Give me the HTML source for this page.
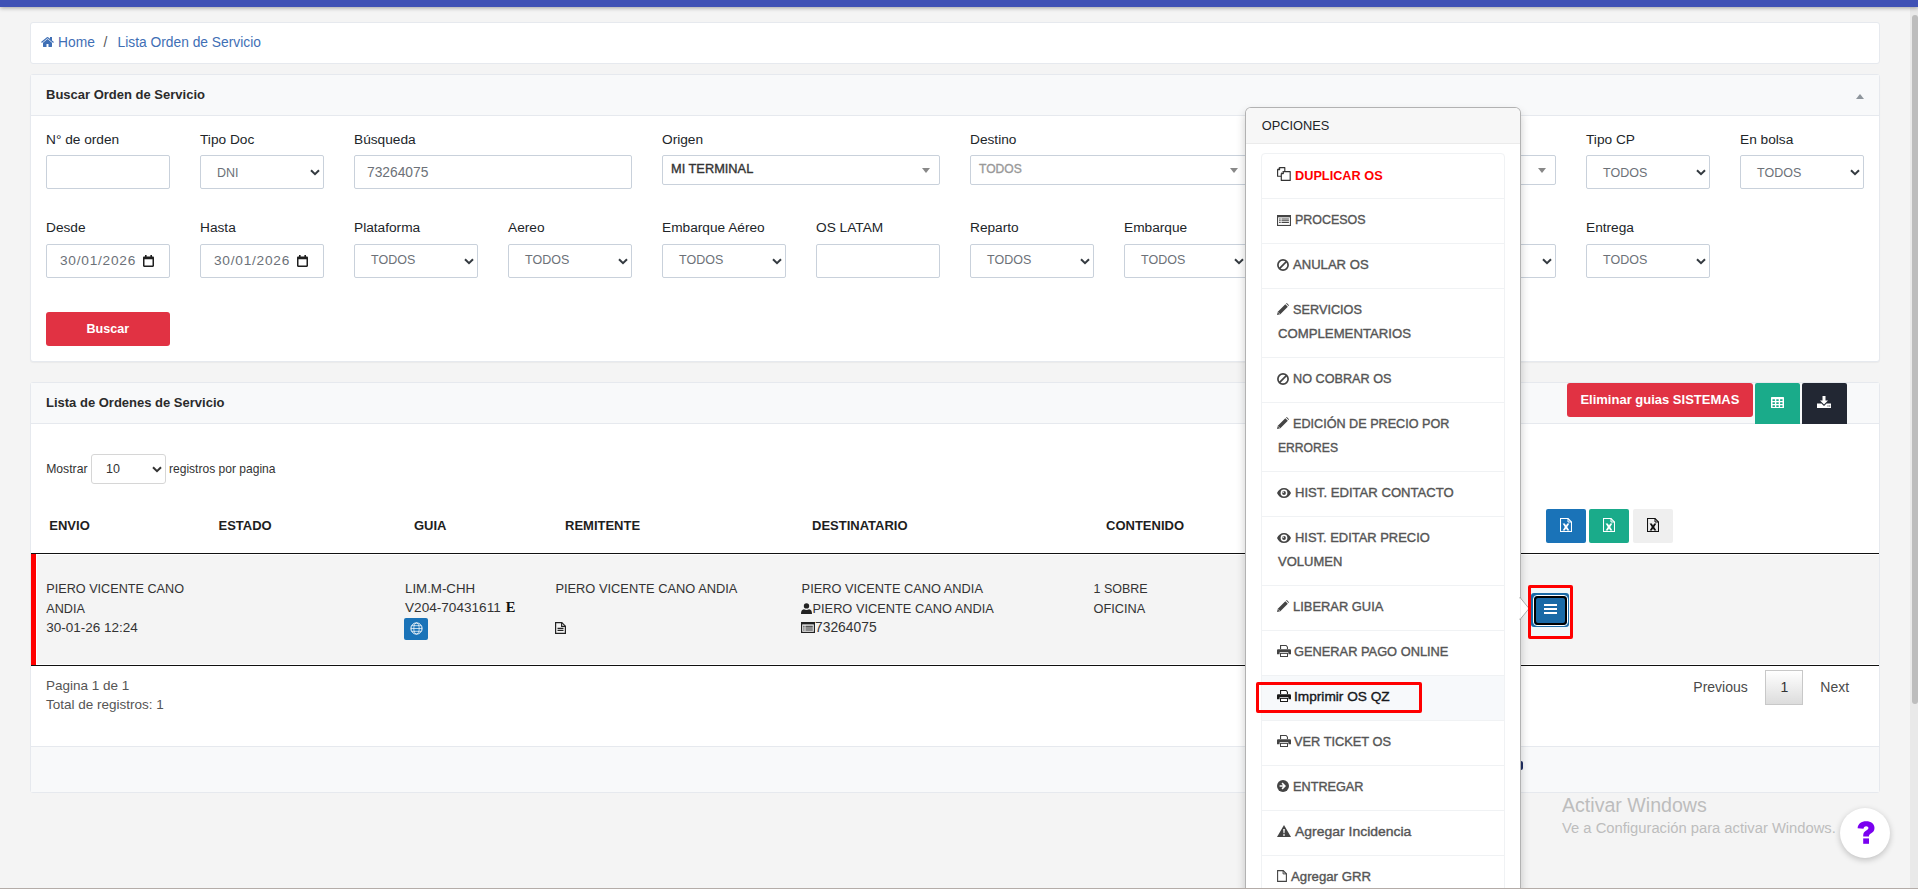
<!DOCTYPE html>
<html><head><meta charset="utf-8">
<style>
*{box-sizing:border-box}
html,body{margin:0;padding:0}
body{width:1918px;height:889px;overflow:hidden;background:#f4f4f4;position:relative;font-family:"Liberation Sans",sans-serif;color:#212529}
.a{position:absolute}
.t{line-height:1;white-space:nowrap}
.topbar{left:0;top:0;width:1918px;z-index:5;height:7px;background:#3f51b5;box-shadow:0 1px 4px rgba(0,0,0,.35)}
.card{position:absolute;left:30px;width:1850px;background:#fff;border:1px solid #e6e9ee;border-radius:3px}
.bc{top:22px;height:42px}
.bc span{position:absolute;top:12px;font-size:13.8px;color:#3f6fb5;white-space:nowrap}
.chdr{position:absolute;left:0;top:0;right:0;background:#f8f9fa;border-bottom:1px solid #e6e9ee}
.ttl{position:absolute;left:14px;font-weight:bold;font-size:13px;color:#2b2b2b;white-space:nowrap}
.lbl{position:absolute;font-size:13.7px;color:#212529;white-space:nowrap}
.inp{position:absolute;height:34px;border:1px solid #c9d1db;border-radius:2px;background:#fff}
.sel{position:absolute;height:34px;border:1px solid #c9d1db;border-radius:2px;background:#fff}
.sel .v{position:absolute;left:16px;top:10.8px;font-size:12.5px;color:#6c7178;white-space:nowrap}
.sel svg{position:absolute;right:3px;top:13px}
.s2{position:absolute;height:30px;border:1px solid #c9d1db;border-radius:2px;background:#fff}
.s2 .v{position:absolute;left:8px;top:6.6px;font-size:12.8px;-webkit-text-stroke:0.35px currentColor;white-space:nowrap}
.s2 .tri{position:absolute;right:9px;top:11.5px;width:0;height:0;border-left:4px solid transparent;border-right:4px solid transparent;border-top:5px solid #888}
</style></head><body>
<div class="a topbar"></div>

<!-- breadcrumb -->
<div class="card bc">
  <svg class="a" style="left:10px;top:14.2px" width="13" height="10" viewBox="0 29 1664 1283" preserveAspectRatio="none"><path d="M1408 768v480q0 26-19 45t-45 19H960V928H704v384H320q-26 0-45-19t-19-45V768q0-1 .5-3t.5-3l575-474 575 474q1 2 1 6zm223-69l-62 74q-8 9-21 11h-3q-13 0-21-7L832 200 140 777q-12 8-24 7-13-2-21-11l-62-74q-8-10-7-23.5T37 654L756 55q32-26 76-26t76 26l244 204V64q0-14 9-23t23-9h192q14 0 23 9t9 23v408l219 182q10 8 11 21.5t-7 23.5z" fill="#3f6fb5"/></svg>
  <span style="left:27px">Home</span>
  <span style="left:72.5px;color:#555">/</span>
  <span style="left:86.5px">Lista Orden de Servicio</span>
</div>

<!-- search card -->
<div class="card" style="top:74px;height:288px;box-shadow:0 1px 1px rgba(0,0,0,.04)">
  <div class="chdr" style="height:41px">
    <div class="a" style="left:1825px;top:19px;width:0;height:0;border-left:4.5px solid transparent;border-right:4.5px solid transparent;border-bottom:5px solid #8e959c"></div>
  </div>
</div>
<!-- fields -->
<div class="t a" style="left:46px;top:88.3px;font-size:13px;font-weight:bold;color:#2b2b2b">Buscar Orden de Servicio</div>
<div class="t lbl" style="left:46px;top:133.1px">N° de orden</div>
<div class="inp" style="left:46px;top:155px;width:124px"></div>
<div class="t lbl" style="left:200px;top:133.1px">Tipo Doc</div>
<div class="sel" style="left:200px;top:155px;width:124px"><span class="v t">DNI</span><svg width="10" height="7" viewBox="0 0 10 7"><path d="M1 1.2l4 4 4-4" fill="none" stroke="#343a40" stroke-width="2"/></svg></div>
<div class="t lbl" style="left:354px;top:133.1px">Búsqueda</div>
<div class="inp" style="left:354px;top:155px;width:278px"><span class="t" style="position:absolute;left:12px;top:10.4px;font-size:13.8px;color:#6c7178">73264075</span></div>
<div class="t lbl" style="left:662px;top:133.1px">Origen</div>
<div class="s2" style="left:662px;top:155px;width:278px"><span class="v t" style="color:#333">MI TERMINAL</span><i class="tri"></i></div>
<div class="t lbl" style="left:970px;top:133.1px">Destino</div>
<div class="s2" style="left:970px;top:155px;width:278px"><span class="v t" style="color:#999;font-size:12.1px;top:7px">TODOS</span><i class="tri"></i></div>
<div class="t lbl" style="left:1278px;top:133.1px">Tipo</div>
<div class="s2" style="left:1278px;top:155px;width:278px"><span class="v t" style="color:#999;font-size:12.1px;top:7px">TODOS</span><i class="tri"></i></div>
<div class="t lbl" style="left:1586px;top:133.1px">Tipo CP</div>
<div class="sel" style="left:1586px;top:155px;width:124px"><span class="v t">TODOS</span><svg width="10" height="7" viewBox="0 0 10 7"><path d="M1 1.2l4 4 4-4" fill="none" stroke="#343a40" stroke-width="2"/></svg></div>
<div class="t lbl" style="left:1740px;top:133.1px">En bolsa</div>
<div class="sel" style="left:1740px;top:155px;width:124px"><span class="v t">TODOS</span><svg width="10" height="7" viewBox="0 0 10 7"><path d="M1 1.2l4 4 4-4" fill="none" stroke="#343a40" stroke-width="2"/></svg></div>
<div class="t lbl" style="left:46px;top:221.2px">Desde</div>
<div class="inp" style="left:46px;top:244px;width:124px"><span class="t" style="position:absolute;left:13px;top:9.4px;font-size:13.7px;color:#6c7178;letter-spacing:0.75px">30/01/2026</span><span style="position:absolute;left:96px;top:10px;line-height:0"><svg width="11" height="12" viewBox="0 0 11 12"><path d="M2 0h1.6v1.5h3.8V0H9v1.5h.8c.7 0 1.2.5 1.2 1.2v8.1c0 .7-.5 1.2-1.2 1.2H1.2C.5 12 0 11.5 0 10.8V2.7C0 2 .5 1.5 1.2 1.5H2zM1.5 4.3v6.2h8V4.3z" fill="#1f1f1f"/></svg></span></div>
<div class="t lbl" style="left:200px;top:221.2px">Hasta</div>
<div class="inp" style="left:200px;top:244px;width:124px"><span class="t" style="position:absolute;left:13px;top:9.4px;font-size:13.7px;color:#6c7178;letter-spacing:0.75px">30/01/2026</span><span style="position:absolute;left:96px;top:10px;line-height:0"><svg width="11" height="12" viewBox="0 0 11 12"><path d="M2 0h1.6v1.5h3.8V0H9v1.5h.8c.7 0 1.2.5 1.2 1.2v8.1c0 .7-.5 1.2-1.2 1.2H1.2C.5 12 0 11.5 0 10.8V2.7C0 2 .5 1.5 1.2 1.5H2zM1.5 4.3v6.2h8V4.3z" fill="#1f1f1f"/></svg></span></div>
<div class="t lbl" style="left:354px;top:221.2px">Plataforma</div>
<div class="sel" style="left:354px;top:244px;width:124px"><span class="v t" style="top:9.3px">TODOS</span><svg width="10" height="7" viewBox="0 0 10 7"><path d="M1 1.2l4 4 4-4" fill="none" stroke="#343a40" stroke-width="2"/></svg></div>
<div class="t lbl" style="left:508px;top:221.2px">Aereo</div>
<div class="sel" style="left:508px;top:244px;width:124px"><span class="v t" style="top:9.3px">TODOS</span><svg width="10" height="7" viewBox="0 0 10 7"><path d="M1 1.2l4 4 4-4" fill="none" stroke="#343a40" stroke-width="2"/></svg></div>
<div class="t lbl" style="left:662px;top:221.2px">Embarque Aéreo</div>
<div class="sel" style="left:662px;top:244px;width:124px"><span class="v t" style="top:9.3px">TODOS</span><svg width="10" height="7" viewBox="0 0 10 7"><path d="M1 1.2l4 4 4-4" fill="none" stroke="#343a40" stroke-width="2"/></svg></div>
<div class="t lbl" style="left:816px;top:221.2px">OS LATAM</div>
<div class="inp" style="left:816px;top:244px;width:124px"></div>
<div class="t lbl" style="left:970px;top:221.2px">Reparto</div>
<div class="sel" style="left:970px;top:244px;width:124px"><span class="v t" style="top:9.3px">TODOS</span><svg width="10" height="7" viewBox="0 0 10 7"><path d="M1 1.2l4 4 4-4" fill="none" stroke="#343a40" stroke-width="2"/></svg></div>
<div class="t lbl" style="left:1124px;top:221.2px">Embarque</div>
<div class="sel" style="left:1124px;top:244px;width:124px"><span class="v t" style="top:9.3px">TODOS</span><svg width="10" height="7" viewBox="0 0 10 7"><path d="M1 1.2l4 4 4-4" fill="none" stroke="#343a40" stroke-width="2"/></svg></div>
<div class="t lbl" style="left:1278px;top:221.2px">Estado</div>
<div class="sel" style="left:1278px;top:244px;width:124px"><span class="v t" style="top:9.3px">TODOS</span><svg width="10" height="7" viewBox="0 0 10 7"><path d="M1 1.2l4 4 4-4" fill="none" stroke="#343a40" stroke-width="2"/></svg></div>
<div class="t lbl" style="left:1432px;top:221.2px">Otro</div>
<div class="sel" style="left:1432px;top:244px;width:124px"><span class="v t" style="top:9.3px">TODOS</span><svg width="10" height="7" viewBox="0 0 10 7"><path d="M1 1.2l4 4 4-4" fill="none" stroke="#343a40" stroke-width="2"/></svg></div>
<div class="t lbl" style="left:1586px;top:221.2px">Entrega</div>
<div class="sel" style="left:1586px;top:244px;width:124px"><span class="v t" style="top:9.3px">TODOS</span><svg width="10" height="7" viewBox="0 0 10 7"><path d="M1 1.2l4 4 4-4" fill="none" stroke="#343a40" stroke-width="2"/></svg></div>
<div class="a btnred" style="left:46px;top:312px;width:124px;height:34px;border-radius:3px;background:#e13243"><span class="t" style="position:absolute;left:40.5px;top:11.4px;font-size:12.6px;font-weight:bold;color:#fff">Buscar</span></div>
<!-- list -->
<div class="card" style="top:382px;height:411px"><div class="chdr" style="height:41px"></div><div class="a" style="left:0;right:0;top:363px;height:46px;background:#f8f9fa;border-top:1px solid #e6e9ee"></div></div>
<div class="t a" style="left:46px;top:396.2px;font-size:13px;font-weight:bold;color:#2b2b2b">Lista de Ordenes de Servicio</div>
<div class="a" style="left:1567px;top:383px;width:186px;height:34px;background:#e13243;border-radius:3px"></div>
<div class="t a" style="left:1580.4px;top:393.1px;font-size:13px;font-weight:bold;color:#fff">Eliminar guias SISTEMAS</div>
<div class="a" style="left:1755px;top:383px;width:45px;height:41px;background:#1aab8a;border-radius:2px 2px 0 0"></div>
<svg class="a" style="left:1771px;top:397px" width="13" height="11" viewBox="0 0 13 11"><path d="M0 .6Q0 0 .6 0h11.8q.6 0 .6.6v9.8q0 .6-.6.6H.6Q0 11 0 10.4z" fill="#fff"/><path d="M1.5 2.2h2.4v1.9H1.5zM5.3 2.2h2.4v1.9H5.3zM9.1 2.2h2.4v1.9H9.1zM1.5 5.2h2.4v1.9H1.5zM5.3 5.2h2.4v1.9H5.3zM9.1 5.2h2.4v1.9H9.1zM1.5 8.2h2.4v1.7H1.5zM5.3 8.2h2.4v1.7H5.3zM9.1 8.2h2.4v1.7H9.1z" fill="#1aab8a"/></svg>
<div class="a" style="left:1802px;top:383px;width:45px;height:41px;background:#222733;border-radius:2px 2px 0 0"></div>
<svg class="a" style="left:1817px;top:396px" width="14" height="12" viewBox="0 0 14 12"><path d="M5.5 0h3v4.5h2.5L7 8.5 3 4.5h2.5z" fill="#fff"/><path d="M0 7.5h4.5L7 10l2.5-2.5H14V12H0z" fill="#fff"/><path d="M10.5 9.6h1v1h-1zM12.2 9.6h1v1h-1z" fill="#222733"/></svg>
<div class="t a" style="left:46.2px;top:462.9px;font-size:12.2px;color:#333">Mostrar</div>
<div class="a" style="left:91px;top:454px;width:75px;height:30px;border:1px solid #d6d6d6;border-radius:3px;background:#fff"></div>
<div class="t a" style="left:106px;top:462.6px;font-size:12.5px;color:#333">10</div>
<svg class="a" style="left:152px;top:466px" width="10" height="7" viewBox="0 0 10 7"><path d="M1 1.2l4 4 4-4" fill="none" stroke="#333" stroke-width="2"/></svg>
<div class="t a" style="left:169px;top:463.0px;font-size:12.05px;color:#333">registros por pagina</div>
<div class="t a" style="left:49.3px;top:519.0px;font-size:13px;font-weight:bold;color:#1e1e1e">ENVIO</div>
<div class="t a" style="left:218.5px;top:519.0px;font-size:13px;font-weight:bold;color:#1e1e1e">ESTADO</div>
<div class="t a" style="left:414px;top:519.0px;font-size:13px;font-weight:bold;color:#1e1e1e">GUIA</div>
<div class="t a" style="left:565px;top:519.0px;font-size:13px;font-weight:bold;color:#1e1e1e">REMITENTE</div>
<div class="t a" style="left:812px;top:519.0px;font-size:13px;font-weight:bold;color:#1e1e1e">DESTINATARIO</div>
<div class="t a" style="left:1106px;top:519.0px;font-size:13px;font-weight:bold;color:#1e1e1e">CONTENIDO</div>
<div class="a" style="left:1546px;top:509px;width:40px;height:34px;background:#1a73b8;border-radius:2px"><span class="a" style="left:14px;top:9px;line-height:0"><svg width="12" height="14" viewBox="0 0 12 14"><path d="M.5.5h7.5l3.5 3.5v9.5H.5z" fill="none" stroke="#fff" stroke-width="1.1"/><path d="M8 .5v3.5h3.5" fill="none" stroke="#fff" stroke-width="1"/><path d="M2.6 5.5h2.2l1.2 2 1.2-2h2.2L7.2 9l2.2 3.5H7.2L6 10.5l-1.2 2H2.6L4.8 9z" fill="#fff"/></svg></span></div>
<div class="a" style="left:1589px;top:509px;width:40px;height:34px;background:#1aab8a;border-radius:2px"><span class="a" style="left:14px;top:9px;line-height:0"><svg width="12" height="14" viewBox="0 0 12 14"><path d="M.5.5h7.5l3.5 3.5v9.5H.5z" fill="none" stroke="#fff" stroke-width="1.1"/><path d="M8 .5v3.5h3.5" fill="none" stroke="#fff" stroke-width="1"/><path d="M2.6 5.5h2.2l1.2 2 1.2-2h2.2L7.2 9l2.2 3.5H7.2L6 10.5l-1.2 2H2.6L4.8 9z" fill="#fff"/></svg></span></div>
<div class="a" style="left:1633px;top:509px;width:40px;height:34px;background:#efefef;border-radius:2px"><span class="a" style="left:14px;top:9px;line-height:0"><svg width="12" height="14" viewBox="0 0 12 14"><path d="M.5.5h7.5l3.5 3.5v9.5H.5z" fill="none" stroke="#111" stroke-width="1.1"/><path d="M8 .5v3.5h3.5" fill="none" stroke="#111" stroke-width="1"/><path d="M2.6 5.5h2.2l1.2 2 1.2-2h2.2L7.2 9l2.2 3.5H7.2L6 10.5l-1.2 2H2.6L4.8 9z" fill="#111"/></svg></span></div>
<div class="a" style="left:31px;top:553px;width:1848px;height:1px;background:#111"></div>
<div class="a" style="left:37px;top:555px;width:1842px;height:109px;background:#f4f4f4"></div>
<div class="a" style="left:31px;top:665px;width:1848px;height:1px;background:#111"></div>
<div class="a" style="left:31px;top:554px;width:5px;height:111px;background:#f00"></div>
<div class="t a" style="left:46.3px;top:583.1px;font-size:12.65px;color:#333">PIERO VICENTE CANO</div>
<div class="t a" style="left:46.3px;top:602.9px;font-size:12.65px;color:#333">ANDIA</div>
<div class="t a" style="left:46.3px;top:621.2px;font-size:13.5px;color:#333">30-01-26 12:24</div>
<div class="t a" style="left:405px;top:581.7px;font-size:13.3px;color:#333">LIM.M-CHH</div>
<div class="t a" style="left:405px;top:601.2px;font-size:13.6px;color:#333">V204-70431611</div>
<div class="t a" style="left:505.8px;top:600.4px;font-size:14.5px;font-family:'Liberation Serif',serif;font-weight:bold;color:#111">E</div>
<div class="a" style="left:404px;top:618px;width:24px;height:22px;background:#1a73b8;border-radius:2px"><span class="a" style="left:5.5px;top:3.6px;line-height:0"><svg width="13" height="13" viewBox="0 0 13 13"><g fill="none" stroke="#fff"><circle cx="6.5" cy="6.5" r="5.6" stroke-width="1"/><ellipse cx="6.5" cy="6.5" rx="2.7" ry="5.6" stroke-width=".7"/><path d="M.9 6.5h11.2M1.8 3.7h9.4M1.8 9.3h9.4" stroke-width=".7"/></g></svg></span></div>
<div class="t a" style="left:555.4px;top:583.0px;font-size:12.85px;color:#333">PIERO VICENTE CANO ANDIA</div>
<span class="a" style="left:554.6px;top:622px;line-height:0"><svg width="11" height="12" viewBox="0 0 11 12"><path d="M.6.6h6.2l3.6 3.6v7.2H.6z" fill="none" stroke="#222" stroke-width="1.2"/><path d="M6.6.6v3.8h3.8" fill="none" stroke="#222" stroke-width="1.1"/><path d="M2.5 6.4h6M2.5 8.4h6" stroke="#222" stroke-width="1.1"/></svg></span>
<div class="t a" style="left:801.6px;top:582.8px;font-size:12.8px;color:#333">PIERO VICENTE CANO ANDIA</div>
<span class="a" style="left:801px;top:603px;line-height:0"><svg width="11" height="11" viewBox="0 0 11 11"><circle cx="5.5" cy="2.9" r="2.7" fill="#222"/><path d="M0 11c0-3 .9-4.6 3-4.8.7.5 1.5.8 2.5.8s1.8-.3 2.5-.8c2.1.2 3 1.8 3 4.8z" fill="#222"/></svg></span>
<div class="t a" style="left:812.5px;top:602.7px;font-size:12.8px;color:#333">PIERO VICENTE CANO ANDIA</div>
<span class="a" style="left:801px;top:622px;line-height:0"><svg width="14" height="11" viewBox="0 0 14 11"><path d="M0 0h14v11H0z" fill="#222"/><path d="M1.2 2.4h11.6v7.4H1.2z" fill="#f4f4f4"/><path d="M2.2 3.7h1.4v1H2.2zM4.4 3.7h7.4v1H4.4zM2.2 5.6h1.4v1H2.2zM4.4 5.6h7.4v1H4.4zM2.2 7.5h1.4v1H2.2zM4.4 7.5h7.4v1H4.4z" fill="#222"/></svg></span>
<div class="t a" style="left:815px;top:620.8px;font-size:13.85px;color:#333">73264075</div>
<div class="t a" style="left:1093.5px;top:583.0px;font-size:12.5px;color:#333">1 SOBRE</div>
<div class="t a" style="left:1093.5px;top:602.7px;font-size:12.75px;color:#333">OFICINA</div>
<div class="t a" style="left:46px;top:679.3px;font-size:13.5px;color:#555">Pagina 1 de 1</div>
<div class="t a" style="left:46px;top:698.0px;font-size:13.5px;color:#555">Total de registros: 1</div>
<!-- popover -->
<div class="a" style="left:1245px;top:107px;width:276px;height:800px;background:#fff;border:1px solid rgba(0,0,0,.3);border-radius:6px;box-shadow:0 5px 10px rgba(0,0,0,.2)"><div class="a" style="left:0;top:0;right:0;height:36px;background:#f7f7f7;border-bottom:1px solid #ebebeb;border-radius:5px 5px 0 0"></div></div>
<svg class="a" style="left:1519px;top:597px" width="11" height="23" viewBox="0 0 11 23"><path d="M1 0.5L10 11.5 1 22.5z" fill="#fff" stroke="rgba(0,0,0,.3)" stroke-width="1"/><path d="M0 1.5h1.6v20H0z" fill="#fff"/></svg>
<div class="t a" style="left:1261.7px;top:120.2px;font-size:12.8px;color:#212529">OPCIONES</div>
<div class="a" style="left:1261px;top:153.0px;width:243.5px;height:46.0px;background:#fff;border:1px solid #f0f2f4;border-radius:4px 4px 0 0;"></div>
<span class="a" style="left:1277px;top:166.7px;line-height:0"><svg width="14" height="14" viewBox="0 0 14 14"><g fill="#fff" stroke="#333" stroke-width="1.15" stroke-linejoin="round"><path d="M2.6.6h5.2v8.6H.6V2.6z"/><path d="M.6 2.6h2V.6"/><path d="M6.3 4.6h6.9v8.8H4.3V6.6z"/><path d="M4.3 6.6h2v-2"/></g></svg></span>
<div class="t a" style="left:1294.5px;top:169.0px;font-size:13.6px;font-weight:bold;color:#f00;transform:scaleX(0.9362);transform-origin:0 0">DUPLICAR OS</div>
<div class="a" style="left:1261px;top:198.0px;width:243.5px;height:46.0px;background:#fff;border:1px solid #f0f2f4;"></div>
<span class="a" style="left:1277px;top:214.5px;line-height:0"><svg width="14" height="11" viewBox="0 0 14 11"><path d="M0 0h14v11H0z" fill="#444"/><path d="M1.1 2.3h11.8v7.6H1.1z" fill="#fff"/><path d="M2.1 3.5h1.6v.9H2.1zM4.5 3.5h7.4v.9H4.5zM2.1 5.3h1.6v.9H2.1zM4.5 5.3h7.4v.9H4.5zM2.1 7.1h1.6v.9H2.1zM4.5 7.1h7.4v.9H4.5z" fill="#444"/></svg></span>
<div class="t a" style="left:1294.7px;top:213.2px;font-size:13.6px;-webkit-text-stroke:0.38px #555;color:#555;transform:scaleX(0.9161);transform-origin:0 0">PROCESOS</div>
<div class="a" style="left:1261px;top:243.0px;width:243.5px;height:46.0px;background:#fff;border:1px solid #f0f2f4;"></div>
<span class="a" style="left:1277px;top:258.5px;line-height:0"><svg width="12" height="12" viewBox="0 0 12 12"><circle cx="6" cy="6" r="5.1" fill="none" stroke="#444" stroke-width="1.7"/><path d="M2.4 9.6l7.2-7.2" stroke="#444" stroke-width="1.7"/></svg></span>
<div class="t a" style="left:1292.8px;top:258.2px;font-size:13.6px;-webkit-text-stroke:0.38px #555;color:#555;transform:scaleX(0.9623);transform-origin:0 0">ANULAR OS</div>
<div class="a" style="left:1261px;top:288.0px;width:243.5px;height:70.0px;background:#fff;border:1px solid #f0f2f4;"></div>
<span class="a" style="left:1277px;top:303.2px;line-height:0"><svg width="12" height="12" viewBox="0 0 12 12"><path d="M0 12l.8-3.3L8.3 1.2l2.5 2.5-7.5 7.5z" fill="#444"/><path d="M9 .5l.8-.5L12 2.2l-.5.8z" fill="#444"/><path d="M1.2 9.4l1.4 1.4" stroke="#fff" stroke-width=".7"/></svg></span>
<div class="t a" style="left:1292.8px;top:303.2px;font-size:13.6px;-webkit-text-stroke:0.38px #555;color:#555;transform:scaleX(0.9350);transform-origin:0 0">SERVICIOS</div>
<div class="t a" style="left:1277.5px;top:327.2px;font-size:13.6px;-webkit-text-stroke:0.38px #555;color:#555;transform:scaleX(0.9693);transform-origin:0 0">COMPLEMENTARIOS</div>
<div class="a" style="left:1261px;top:357.0px;width:243.5px;height:46.0px;background:#fff;border:1px solid #f0f2f4;"></div>
<span class="a" style="left:1277px;top:372.5px;line-height:0"><svg width="12" height="12" viewBox="0 0 12 12"><circle cx="6" cy="6" r="5.1" fill="none" stroke="#444" stroke-width="1.7"/><path d="M2.4 9.6l7.2-7.2" stroke="#444" stroke-width="1.7"/></svg></span>
<div class="t a" style="left:1292.8px;top:372.2px;font-size:13.6px;-webkit-text-stroke:0.38px #555;color:#555;transform:scaleX(0.9314);transform-origin:0 0">NO COBRAR OS</div>
<div class="a" style="left:1261px;top:402.0px;width:243.5px;height:70.0px;background:#fff;border:1px solid #f0f2f4;"></div>
<span class="a" style="left:1277px;top:417.2px;line-height:0"><svg width="12" height="12" viewBox="0 0 12 12"><path d="M0 12l.8-3.3L8.3 1.2l2.5 2.5-7.5 7.5z" fill="#444"/><path d="M9 .5l.8-.5L12 2.2l-.5.8z" fill="#444"/><path d="M1.2 9.4l1.4 1.4" stroke="#fff" stroke-width=".7"/></svg></span>
<div class="t a" style="left:1292.8px;top:417.2px;font-size:13.6px;-webkit-text-stroke:0.38px #555;color:#555;transform:scaleX(0.9285);transform-origin:0 0">EDICIÓN DE PRECIO POR</div>
<div class="t a" style="left:1277.5px;top:441.2px;font-size:13.6px;-webkit-text-stroke:0.38px #555;color:#555;transform:scaleX(0.8924);transform-origin:0 0">ERRORES</div>
<div class="a" style="left:1261px;top:471.0px;width:243.5px;height:46.0px;background:#fff;border:1px solid #f0f2f4;"></div>
<span class="a" style="left:1277px;top:488.2px;line-height:0"><svg width="14" height="10" viewBox="0 0 14 10"><path d="M7 0C3.8 0 1.3 2 0 5c1.3 3 3.8 5 7 5s5.7-2 7-5c-1.3-3-3.8-5-7-5zm0 8.4A3.4 3.4 0 1 1 7 1.6a3.4 3.4 0 0 1 0 6.8z" fill="#444"/><circle cx="7" cy="5" r="1.9" fill="#444"/><circle cx="6.2" cy="4.2" r=".7" fill="#fff"/></svg></span>
<div class="t a" style="left:1294.5px;top:486.2px;font-size:13.6px;-webkit-text-stroke:0.38px #555;color:#555;transform:scaleX(0.9644);transform-origin:0 0">HIST. EDITAR CONTACTO</div>
<div class="a" style="left:1261px;top:516.0px;width:243.5px;height:70.0px;background:#fff;border:1px solid #f0f2f4;"></div>
<span class="a" style="left:1277px;top:533.2px;line-height:0"><svg width="14" height="10" viewBox="0 0 14 10"><path d="M7 0C3.8 0 1.3 2 0 5c1.3 3 3.8 5 7 5s5.7-2 7-5c-1.3-3-3.8-5-7-5zm0 8.4A3.4 3.4 0 1 1 7 1.6a3.4 3.4 0 0 1 0 6.8z" fill="#444"/><circle cx="7" cy="5" r="1.9" fill="#444"/><circle cx="6.2" cy="4.2" r=".7" fill="#fff"/></svg></span>
<div class="t a" style="left:1294.5px;top:531.2px;font-size:13.6px;-webkit-text-stroke:0.38px #555;color:#555;transform:scaleX(0.9510);transform-origin:0 0">HIST. EDITAR PRECIO</div>
<div class="t a" style="left:1277.5px;top:555.2px;font-size:13.6px;-webkit-text-stroke:0.38px #555;color:#555;transform:scaleX(0.9564);transform-origin:0 0">VOLUMEN</div>
<div class="a" style="left:1261px;top:585.0px;width:243.5px;height:46.0px;background:#fff;border:1px solid #f0f2f4;"></div>
<span class="a" style="left:1277px;top:600.2px;line-height:0"><svg width="12" height="12" viewBox="0 0 12 12"><path d="M0 12l.8-3.3L8.3 1.2l2.5 2.5-7.5 7.5z" fill="#444"/><path d="M9 .5l.8-.5L12 2.2l-.5.8z" fill="#444"/><path d="M1.2 9.4l1.4 1.4" stroke="#fff" stroke-width=".7"/></svg></span>
<div class="t a" style="left:1292.8px;top:600.2px;font-size:13.6px;-webkit-text-stroke:0.38px #555;color:#555;transform:scaleX(0.9497);transform-origin:0 0">LIBERAR GUIA</div>
<div class="a" style="left:1261px;top:630.0px;width:243.5px;height:46.0px;background:#fff;border:1px solid #f0f2f4;"></div>
<span class="a" style="left:1277px;top:645.2px;line-height:0"><svg width="14" height="12" viewBox="0 0 14 12"><path d="M3 0h6.3L11 1.7V4H3z" fill="#444"/><path d="M4.1 1h4.8l1 1v2H4.1z" fill="#fff"/><path d="M1.2 4.2h11.6c.7 0 1.2.5 1.2 1.2v3.8h-2.6V7.3H2.6v1.9H0V5.4c0-.7.5-1.2 1.2-1.2z" fill="#444"/><path d="M3 8h8v4H3z" fill="#444"/><path d="M4 8.9h6v2.1H4z" fill="#fff"/></svg></span>
<div class="t a" style="left:1293.5px;top:645.2px;font-size:13.6px;-webkit-text-stroke:0.38px #555;color:#555;transform:scaleX(0.9434);transform-origin:0 0">GENERAR PAGO ONLINE</div>
<div class="a" style="left:1261px;top:675.0px;width:243.5px;height:46.0px;background:#f7f9fb;border:1px solid #f0f2f4;"></div>
<span class="a" style="left:1277px;top:690.2px;line-height:0"><svg width="14" height="12" viewBox="0 0 14 12"><path d="M3 0h6.3L11 1.7V4H3z" fill="#1a1a1a"/><path d="M4.1 1h4.8l1 1v2H4.1z" fill="#fff"/><path d="M1.2 4.2h11.6c.7 0 1.2.5 1.2 1.2v3.8h-2.6V7.3H2.6v1.9H0V5.4c0-.7.5-1.2 1.2-1.2z" fill="#1a1a1a"/><path d="M3 8h8v4H3z" fill="#1a1a1a"/><path d="M4 8.9h6v2.1H4z" fill="#fff"/></svg></span>
<div class="t a" style="left:1293.5px;top:690.2px;font-size:13.6px;-webkit-text-stroke:0.38px #16181b;color:#16181b;transform:scaleX(1.0057);transform-origin:0 0">Imprimir OS QZ</div>
<div class="a" style="left:1261px;top:720.0px;width:243.5px;height:46.0px;background:#fff;border:1px solid #f0f2f4;"></div>
<span class="a" style="left:1277px;top:735.2px;line-height:0"><svg width="14" height="12" viewBox="0 0 14 12"><path d="M3 0h6.3L11 1.7V4H3z" fill="#444"/><path d="M4.1 1h4.8l1 1v2H4.1z" fill="#fff"/><path d="M1.2 4.2h11.6c.7 0 1.2.5 1.2 1.2v3.8h-2.6V7.3H2.6v1.9H0V5.4c0-.7.5-1.2 1.2-1.2z" fill="#444"/><path d="M3 8h8v4H3z" fill="#444"/><path d="M4 8.9h6v2.1H4z" fill="#fff"/></svg></span>
<div class="t a" style="left:1293.5px;top:735.2px;font-size:13.6px;-webkit-text-stroke:0.38px #555;color:#555;transform:scaleX(0.9417);transform-origin:0 0">VER TICKET OS</div>
<div class="a" style="left:1261px;top:765.0px;width:243.5px;height:46.0px;background:#fff;border:1px solid #f0f2f4;"></div>
<span class="a" style="left:1277px;top:780.2px;line-height:0"><svg width="12" height="12" viewBox="0 0 12 12"><circle cx="6" cy="6" r="6" fill="#444"/><path d="M5.6 2.6L9 6 5.6 9.4 4.5 8.3 6.1 6.8H2.6V5.2h3.5L4.5 3.7z" fill="#fff"/></svg></span>
<div class="t a" style="left:1292.8px;top:780.2px;font-size:13.6px;-webkit-text-stroke:0.38px #555;color:#555;transform:scaleX(0.9334);transform-origin:0 0">ENTREGAR</div>
<div class="a" style="left:1261px;top:810.0px;width:243.5px;height:46.0px;background:#fff;border:1px solid #f0f2f4;"></div>
<span class="a" style="left:1277px;top:825.2px;line-height:0"><svg width="14" height="12" viewBox="0 0 14 12"><path d="M7 0l7 12H0z" fill="#444"/><path d="M6.2 4h1.6l-.3 4.2h-1zM6.2 9.2h1.6v1.5H6.2z" fill="#fff"/></svg></span>
<div class="t a" style="left:1294.5px;top:825.2px;font-size:13.6px;-webkit-text-stroke:0.38px #555;color:#555;transform:scaleX(1.0268);transform-origin:0 0">Agregar Incidencia</div>
<div class="a" style="left:1261px;top:855.0px;width:243.5px;height:46.0px;background:#fff;border:1px solid #f0f2f4;"></div>
<span class="a" style="left:1277px;top:870.2px;line-height:0"><svg width="10" height="12" viewBox="0 0 10 12"><path d="M.6.6h5.6l3.2 3.2v7.6H.6z" fill="none" stroke="#444" stroke-width="1.1"/><path d="M6.1.6v3.3h3.3" fill="none" stroke="#444" stroke-width="1"/></svg></span>
<div class="t a" style="left:1291px;top:870.2px;font-size:13.6px;-webkit-text-stroke:0.38px #555;color:#555;transform:scaleX(0.9714);transform-origin:0 0">Agregar GRR</div>
<div class="a" style="left:1256px;top:682px;width:166px;height:31px;border:3px solid #f00;border-radius:2px"></div>
<div class="a" style="left:1528px;top:585px;width:45px;height:54px;border:3px solid #f00;border-radius:2px;background:#f1f8fa"></div>
<div class="a" style="left:1531px;top:593px;width:38px;height:34px;background:#1a6aa6;border-radius:3px"></div>
<div class="a" style="left:1532.5px;top:594.5px;width:35px;height:31px;border:1px solid #fff;border-radius:4px"></div>
<div class="a" style="left:1533.5px;top:595.5px;width:33px;height:29px;border:2px solid #000;border-radius:4px;background:#1a6aa6"></div>
<div class="a" style="left:1544px;top:604px;width:13px;height:2px;background:#fff;box-shadow:0 4px 0 #fff,0 8px 0 #fff"></div>
<div class="a" style="left:1521px;top:761px;width:2px;height:9px;border-radius:0 2px 2px 0;background:#1d2a5a"></div>
<!-- misc -->
<div class="t a" style="left:1693.3px;top:679.5px;font-size:14px;color:#4a4a4a">Previous</div>
<div class="a" style="left:1765px;top:670px;width:38px;height:35px;border:1px solid #c8c8c8;border-radius:0;background:linear-gradient(#fff,#dcdcdc)"></div>
<div class="t a" style="left:1780.5px;top:679.5px;font-size:14px;color:#333">1</div>
<div class="t a" style="left:1820.3px;top:679.5px;font-size:14px;color:#4a4a4a">Next</div>
<div class="t a" style="left:1562px;top:795.7px;font-size:19.6px;color:#bdbdbd">Activar Windows</div>
<div class="t a" style="left:1562px;top:821.4px;font-size:14.75px;color:#bdbdbd">Ve a Configuración para activar Windows.</div>
<div class="a" style="left:1840px;top:808px;width:50px;height:50px;border-radius:50%;background:#fff;box-shadow:0 2px 6px rgba(0,0,0,.22)"></div>
<svg class="a" style="left:1857px;top:821px" width="18" height="23" viewBox="0 0 18 23"><path d="M0.6 7.2C1 2.8 4.3 0.3 9.2 0.3c4.8 0 8.3 2.6 8.3 6.6 0 3-1.7 4.3-3.6 5.5-1.3.8-1.9 1.4-1.9 2.6v.6H6.2v-1c0-2.6 1-3.8 3-5 1.4-.8 2.2-1.4 2.2-2.5 0-1.1-.9-1.8-2.3-1.8-1.5 0-2.4.9-2.6 2.4z" fill="#7a00f0"/><path d="M6.2 17.4h5.8v5.4H6.2z" fill="#7a00f0"/></svg>
<div class="a" style="left:1910px;top:7px;width:8px;height:881px;background:#e9e9e9"></div>
<div class="a" style="left:1912px;top:15px;width:5.5px;height:689px;background:#bdbdbd;border-radius:3px"></div>
<div class="a" style="left:0;top:888px;width:1918px;height:1px;background:#b4aca8"></div>
</body></html>
